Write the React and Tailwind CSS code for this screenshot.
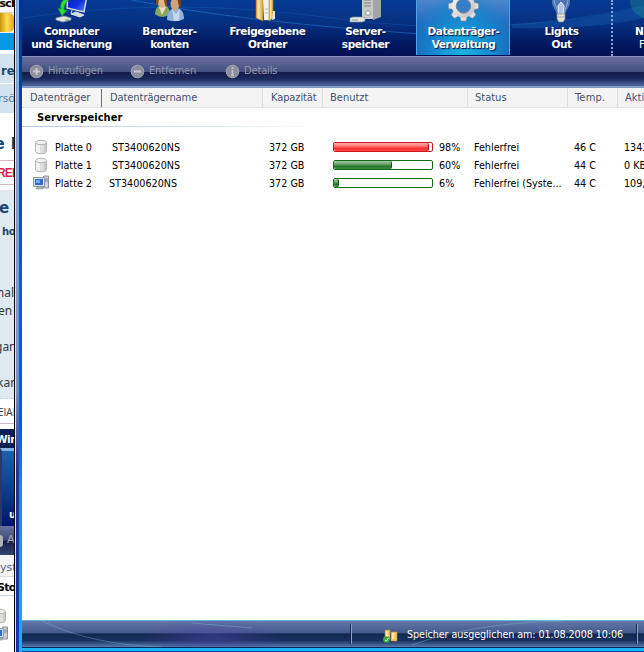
const NAV = [
  { icon: 'sync', lines: ['Computer', 'und Sicherung'] },
  { icon: 'users', lines: ['Benutzer-', 'konten'] },
  { icon: 'folder', lines: ['Freigegebene', 'Ordner'] },
  { icon: 'server', lines: ['Server-', 'speicher'] },
  { icon: 'gear', lines: ['Datenträger-', 'Verwaltung'], active: true },
  { icon: 'bulb', lines: ['Lights', 'Out'] },
]

const DISKS = [
  { name: 'Platte 0', model: 'ST3400620NS', pad: 'pl-[3px]', used: 98, color: 'red', status: 'Fehlerfrei', temp: '46 C', activity: '1343 KB/s' },
  { name: 'Platte 1', model: 'ST3400620NS', pad: 'pl-[3px]', used: 60, color: 'green', status: 'Fehlerfrei', temp: '44 C', activity: '0 KB/s' },
  { name: 'Platte 2', model: 'ST3400620NS', pad: 'pl-0', used: 6, color: 'green', status: 'Fehlerfrei (Syste...', temp: '44 C', activity: '109,5 KB/s', system: true },
]

function NavIcon({ name }) {
  return (
    <svg width="40" height="24" viewBox="0 0 40 24" className="block shrink-0">
      <defs>
        <linearGradient id="metal" x1="0" y1="0" x2="1" y2="1">
          <stop offset="0" stopColor="#fafafa" />
          <stop offset="1" stopColor="#bcbdbe" />
        </linearGradient>
        <linearGradient id="manila" x1="0" y1="0" x2="1" y2="0">
          <stop offset="0" stopColor="#d49a34" />
          <stop offset="0.3" stopColor="#ffe9a0" />
          <stop offset="1" stopColor="#d6a64c" />
        </linearGradient>
        <linearGradient id="screen" x1="0" y1="0" x2="1" y2="1">
          <stop offset="0" stopColor="#0418b0" />
          <stop offset="0.55" stopColor="#1230e0" />
          <stop offset="1" stopColor="#5a8cff" />
        </linearGradient>
      </defs>
      {name === 'sync' && (
        <>
          <path d="M17-6 36-4 33 12 16 8z" fill="url(#screen)" stroke="#d5dbe5" strokeWidth="1.400" />
          <path d="M21 10l-1 4M20 14l9 3 4-2-8-3z" fill="#d8dce0" stroke="#d8dce0" />
          <path d="M15-2C10 1 9 6 10 9L7 8l4 8 5-6-3 0c0-4 1-7 5-10z" fill="#32dc32" stroke="#0a9a24" strokeWidth=".7" />
          <path d="M5 18l8-2 7 2v2l-8 2-7-2z" fill="#e3e5e3" stroke="#8b9294" strokeWidth=".7" />
          <path d="M14 20h4" stroke="#42a846" />
        </>
      )}
      {name === 'users' && (
        <>
          <path d="M6 14c0-6 4-9 8-9s7 3 7 10l-7 2c-3 0-6-1-8-3z" fill="#86a660" />
          <path d="M10 7l3 8 4-8z" fill="#f0e0c0" />
          <ellipse cx="13" cy="1" rx="4.500" ry="7" fill="#e3b67e" />
          <path d="M7-2h3l-1 8-2-2zM15 0h3v6l-2-1z" fill="#824a1e" />
          <path d="M18 20c0-9 4-12 9-12s8 4 8 11q-7 4-17 1z" fill="#90b0da" />
          <path d="M23 9l4 5 4-5 -1 12h-5z" fill="#c4d8f0" />
          <ellipse cx="26" cy="4" rx="4.500" ry="6.500" fill="#d0a478" />
          <path d="M28-3h4v9l-2 1z" fill="#6b4423" />
        </>
      )}
      {name === 'folder' && (
        <>
          <path d="M9-3l7 2v22l-7-3z" fill="url(#manila)" stroke="#b77a20" strokeWidth=".6" />
          <path d="M16 0h7v20h-6z" fill="#f1f2f2" />
          <path d="M18 9h3M18 13h3" stroke="#b9bfc5" />
          <path d="M22-3l4 2v19l-4 3z" fill="url(#manila)" stroke="#b77a20" strokeWidth=".6" />
          <path d="M26 11h2v8l-3 1z" fill="#e8e6df" />
        </>
      )}
      {name === 'server' && (
        <>
          <path d="M17-2h11v21H17z" fill="#c8caca" />
          <path d="M28-2h8v19l-8 3z" fill="#a1a5a7" />
          <path d="M19 0h7M19 3h7M19 6h7" stroke="#7c8284" />
          <circle cx="23" cy="13" r="2.300" fill="#f8f8f8" stroke="#777" strokeWidth=".7" />
          <path d="M5 18l3-1h10l2 1v3l-3 1H5z" fill="#e4e6e6" stroke="#878e92" strokeWidth=".7" />
          <path d="M7 20h6" stroke="#70a870" />
        </>
      )}
      {name === 'gear' && (
        <g transform="translate(20.500 6)">
          {[0, 45, 90, 135].map((angle) => (
            <path
              key={angle}
              d="M-2.600-15h5.200l1 5v20l-1 5h-5.200l-1-5v-20z"
              transform={`rotate(${angle})`}
              fill="#dedfe0"
              stroke="#8c8f92"
              strokeWidth=".6"
            />
          ))}
          <circle r="11.500" fill="url(#metal)" />
          <circle r="7.200" fill="#347fca" stroke="#7f8386" />
        </g>
      )}
      {name === 'bulb' && (
        <>
          <path d="M11-4h18v6c0 5-4 8-5 13h-8C15 10 11 7 11 2z" fill="#7995c8" opacity=".65" />
          <path d="M13-2c0 8 4 9 4 16M27-2c0 8-3 9-4 16" stroke="#bacbe7" opacity=".6" fill="none" />
          <path d="M18 15l-1-9 3-4 3 4-1 9" stroke="#e4edf8" fill="#b0c2e2" />
          <path d="M16 14h8v5l-2 3h-4l-2-3z" fill="#e4e3da" stroke="#8c8c88" strokeWidth=".7" />
          <path d="M16 17h8" stroke="#aaa" />
        </>
      )}
    </svg>
  )
}

function NavBar() {
  return (
    <nav className="relative flex h-[56px] shrink-0 overflow-hidden bg-[linear-gradient(180deg,#053b94_0%,#063080_42%,#021b63_75%,#010d51_100%)]">
      <svg className="absolute inset-0" width="622" height="56">
        <path d="M0 18Q150-4 310 18T622 6" fill="none" stroke="#1768c0" opacity=".35" />
        <path d="M110 0Q220 22 400 34" fill="none" stroke="#258be0" opacity=".45" />
        <path d="M490 24Q570 20 622 6V18Q570 30 490 28z" fill="#1a70c0" opacity=".3" />
        <path d="M608 0h14v18q-14-5-14-18z" fill="#1f8290" opacity=".45" />
      </svg>
      {NAV.map(({ icon, lines, active }) => (
        <div key={icon} className="relative w-[98px] shrink-0 px-[2px]">
          <div
            className={
              active
                ? 'flex h-[55px] flex-col items-center border-x border-[#4fa3e8] bg-[radial-gradient(ellipse_at_50%_100%,#19b4e0_0%,#1784cd_50%,transparent_85%),linear-gradient(180deg,#4d87cc_0%,#256cc0_40%,#165fb5_100%)]'
                : 'flex h-[55px] flex-col items-center'
            }
          >
            <NavIcon name={icon} />
            <div className="pt-px pl-px text-center font-['DejaVu_Sans','Liberation_Sans',sans-serif] text-[10.500px] font-bold leading-[13px] tracking-[-0.4px] whitespace-nowrap text-white [text-shadow:1px_1px_1px_#001040]">
              {lines[0]}
              <br />
              {lines[1]}
            </div>
          </div>
        </div>
      ))}
      <div className="relative ml-[1px] h-full w-0 shrink-0 border-l-2 border-dotted border-[#8ba7d8]" />
      <div className="relative shrink-0 pt-[25px] pl-[22px] font-['DejaVu_Sans',sans-serif] text-[10.500px] font-bold leading-[13px] text-white">
        Netz
        <br />
        <span className="pl-[4px] font-normal">Funk</span>
      </div>
    </nav>
  )
}

function ToolButton({ sign, label, className }) {
  return (
    <div className={`flex items-center gap-[4px] ${className}`}>
      <svg width="15" height="15" viewBox="0 0 15 15">
        <circle cx="7.500" cy="7.500" r="6.300" fill="#8d8f9d" stroke="#a3a5b1" />
        {sign === 'plus' && <path d="M7.500 4v7M4 7.500h7" stroke="#c7cad4" strokeWidth="2" />}
        {sign === 'minus' && <path d="M4 7.500h7" stroke="#c7cad4" strokeWidth="2" />}
        {sign === 'info' && <path d="M7.500 3v2M7.500 6v6M6 11.500h3" stroke="#c0c3ce" strokeWidth="1.600" />}
      </svg>
      <span>{label}</span>
    </div>
  )
}

function Toolbar() {
  return (
    <div className="flex h-[30px] shrink-0 items-center border-t border-[#8790bd] bg-[linear-gradient(180deg,#666f9d_0%,#46517f_50%,#121b49_51%,#1a2a5c_75%,#5267a0_100%)] pl-[7px] font-['DejaVu_Sans_Condensed','DejaVu_Sans',sans-serif] text-[11px] tracking-[-0.15px] text-[#9396aa]">
      <ToolButton sign="plus" label="Hinzufügen" className="w-[101px]" />
      <ToolButton sign="minus" label="Entfernen" className="w-[95px]" />
      <ToolButton sign="info" label="Details" className="w-[80px]" />
    </div>
  )
}

function DiskIcon() {
  return (
    <svg width="16" height="16" viewBox="0 0 16 16">
      <path d="M2.500 3.500v9c0 3 11 3 11 0v-9" fill="#dededc" stroke="#b4b4b2" />
      <path d="M4 5v8M6 6v8" stroke="#fafafa" strokeWidth="1.500" />
      <path d="M12 5v8" stroke="#c4c4c2" strokeWidth="1.500" />
      <ellipse cx="8" cy="3.500" rx="5.500" ry="2.200" fill="#f2f2f0" stroke="#b4b4b2" />
    </svg>
  )
}

function ComputerIcon() {
  return (
    <svg width="17" height="16" viewBox="0 0 17 16">
      <path d="M10.500 1h5v12h-5z" fill="#d0d2d2" stroke="#8b9297" />
      <path d="M12 4h3M12 6h3" stroke="#7d8588" />
      <path d="M.5 2.500h11v9H.5z" fill="#d8dde5" stroke="#8d9aab" />
      <path d="M2 4h8v6H2z" fill="#2f6bd0" />
      <path d="M3 5h4v3H3z" fill="#76a9ef" />
      <path d="M4 12h6v2H3z" fill="#b9c0c8" stroke="#7f8991" strokeWidth=".6" />
    </svg>
  )
}

function UsageBar({ used, color }) {
  const red = color === 'red'
  return (
    <div className={`h-[10px] w-[100px] shrink-0 rounded-[2px] border ${red ? 'border-[#cc1720]' : 'border-[#146b1b]'}`}>
      <div
        className={`h-full rounded-[2px] border-r ${
          red
            ? 'border-[#b90c12] bg-[linear-gradient(180deg,#ffaaa5_0%,#ff7775_40%,#f62d2d_65%,#f44_100%)]'
            : 'border-[#0b5a12] bg-[linear-gradient(180deg,#a4c5a2_0%,#6aa26b_40%,#27762c_65%,#388b3c_100%)]'
        }`}
        style={{ width: `${Math.max(used - 1, 5)}%` }}
      />
    </div>
  )
}

function TableHead() {
  const cell = 'flex h-full items-center border-r border-[#dedfe3] pt-px'
  return (
    <div className="flex h-[20px] shrink-0 items-center border-b border-[#e2e3e6] bg-[#f4f4f4] font-['DejaVu_Sans_Condensed','DejaVu_Sans',sans-serif] text-[11px] whitespace-nowrap text-[#44516c]">
      <div className="flex h-[18px] w-[80px] shrink-0 items-center border-r border-[#6c7079] pt-px pl-[8px]">Datenträger</div>
      <div className={`${cell} w-[161px] shrink-0 pl-[8px] tracking-[-0.07px]`}>Datenträgername</div>
      <div className={`${cell} w-[60px] shrink-0 pl-[8px] tracking-[-0.1px]`}>Kapazität</div>
      <div className={`${cell} w-[145px] shrink-0 pl-[7px]`}>Benutzt</div>
      <div className={`${cell} w-[100px] shrink-0 pl-[7px]`}>Status</div>
      <div className={`${cell} w-[50px] shrink-0 pl-[7px] tracking-[0.2px]`}>Temp.</div>
      <div className="pt-px pl-[7px]">Aktivität</div>
    </div>
  )
}

function DiskTable() {
  return (
    <div className="flex flex-1 flex-col overflow-hidden bg-white font-['DejaVu_Sans_Condensed','DejaVu_Sans',sans-serif] text-[10.700px] text-black">
      <div className="h-[19px] shrink-0 bg-[linear-gradient(90deg,#b6c9ec,#dbe6f8_30%,white_48%)] pb-px">
        <div className="h-full bg-white pl-[15px] text-[11px] font-bold leading-[20px] tracking-[0.08px]">Serverspeicher</div>
      </div>
      <div className="pt-[11px]">
        {DISKS.map((disk) => (
          <div key={disk.name} className="flex h-[18px] items-center pl-[11px] leading-[17px] whitespace-nowrap">
            <div className="w-[22px] shrink-0">{disk.system ? <ComputerIcon /> : <DiskIcon />}</div>
            <div className="w-[54px] shrink-0 pt-px">{disk.name}</div>
            <div className={`w-[160px] shrink-0 pt-px ${disk.pad}`}>{disk.model}</div>
            <div className="w-[64px] shrink-0 pt-px">372 GB</div>
            <UsageBar used={disk.used} color={disk.color} />
            <div className="w-[41px] shrink-0 pt-px pl-[6px]">{disk.used}%</div>
            <div className="w-[100px] shrink-0 pt-px">{disk.status}</div>
            <div className="w-[50px] shrink-0 pt-px">{disk.temp}</div>
            <div className="pt-px">{disk.activity}</div>
          </div>
        ))}
      </div>
    </div>
  )
}

function StatusBar() {
  return (
    <div className="relative flex h-[28px] shrink-0 items-center overflow-hidden border-t border-b border-t-[#66b2d5] border-b-[#092859] bg-[radial-gradient(ellipse_70px_24px_at_190px_16px,#5142a880,transparent),linear-gradient(180deg,#6478a8_0%,#435a8d_45%,#10264f_50%,#183260_75%,#5979ae_100%)] whitespace-nowrap text-white">
      <svg className="absolute inset-0" width="622" height="28">
        <path d="M20 0Q70 24 140 26M170 2l60 5M390 24Q450 2 540 0" fill="none" stroke="#80cbd5" opacity=".35" />
      </svg>
      <div className="h-[20px] w-[329px] shrink-0 border-r border-[#112650]" />
      <div className="h-[20px] w-px shrink-0 bg-[#8d9fc4]" />
      <svg className="relative mt-[3px] ml-[30px] shrink-0" width="17" height="16" viewBox="0 0 17 16">
        <path d="M3 2h5v10H3zM9 4h6v9H9z" fill="#f0c870" stroke="#b98a38" strokeWidth=".6" />
        <path d="M5 3v7M11 5v6" stroke="#fff0b8" strokeWidth="1.500" />
        <circle cx="4.500" cy="11.500" r="3.300" fill="#39a83c" />
        <path d="M3 12l1.500 1 2-3" fill="none" stroke="#d8ffd8" />
      </svg>
      <div className="relative w-[226px] shrink-0 pt-[2px] pl-[8px] font-['DejaVu_Sans_Condensed','DejaVu_Sans',sans-serif] text-[10.700px] tracking-[-0.08px]">
        Speicher ausgeglichen am: 01.08.2008 10:06
      </div>
      <div className="relative ml-[11px] h-[20px] w-[2px] border-l border-[#112650] bg-[#8d9fc4]" />
    </div>
  )
}

// slice of the browser window that sits behind the console
function Background() {
  return (
    <aside className="flex w-[14px] shrink-0 flex-col overflow-hidden bg-white font-['DejaVu_Sans',sans-serif] whitespace-nowrap text-[#17486f]">
      <div className="h-[13px] shrink-0 border-b border-[#d9d8d0] bg-[#faf9f3] text-[11px] font-bold leading-[7px] tracking-[-0.8px] text-black">
        <span className="-ml-[5px]">tsch</span>
      </div>
      <div className="h-[20px] shrink-0 bg-[#eeeeef]">
        <div className="h-[19px] w-[14px] rounded-r-[5px] bg-[linear-gradient(90deg,#c8940c,#ffdf50_50%,#dba51c)]" />
      </div>
      <div className="h-[17px] shrink-0 bg-[#0798e6]" />
      <div className="h-[4px] shrink-0 bg-white" />
      <div className="h-[30px] shrink-0 border-b border-white bg-[#d3e2ef] pl-px text-[11.500px] font-bold leading-[34px]">re</div>
      <div className="h-[29px] shrink-0 bg-[#d3e2ef] font-['Noto_Sans','Open_Sans',sans-serif] text-[11.500px] leading-[27px] text-[#47799e]">
        <span className="-ml-[2px]">rsö</span>
      </div>
      <div className="h-[47px] shrink-0 bg-white text-[16px] font-bold leading-[62px]">
        <span className="-ml-[6px]">e</span> H
      </div>
      <div className="h-[25px] shrink-0 border-y border-[#d8b7bf] font-['Liberation_Sans',sans-serif] text-[12px] font-bold leading-[24px] tracking-[-0.8px] text-[#d12750]">
        <span className="-ml-[3px]">REI</span>
      </div>
      <div className="mt-[5px] flex h-[209px] shrink-0 flex-col border-b border-dashed border-[#bed3df] bg-[#dfe9f0]">
        <div className="h-[30px] shrink-0 text-[15px] font-bold leading-[36px]">
          <span className="-ml-[1px]">e</span>
        </div>
        <div className="h-[22px] shrink-0 pl-[2px] text-[10px] font-bold leading-[23px] tracking-[-0.4px]">home</div>
        <div className="mt-[42px] h-[18px] shrink-0 font-['Noto_Sans','Open_Sans',sans-serif] text-[12px] leading-[18px] text-[#333b42]">
          <span className="-ml-[7px]">mal</span>
        </div>
        <div className="h-[18px] shrink-0 font-['Noto_Sans','Open_Sans',sans-serif] text-[12px] leading-[18px] text-[#333b42]">
          <span className="-ml-[2px]">en</span>
        </div>
        <div className="mt-[18px] h-[18px] shrink-0 font-['Noto_Sans','Open_Sans',sans-serif] text-[12px] leading-[18px] text-[#333b42]">
          <span className="-ml-[5px]">gan</span>
        </div>
        <div className="mt-[18px] h-[18px] shrink-0 font-['Noto_Sans','Open_Sans',sans-serif] text-[12px] leading-[18px] text-[#333b42]">
          <span className="-ml-[3px]">kan</span>
        </div>
      </div>
      <div className="h-[25px] shrink-0 border-b border-[#d0b8ca] font-['Open_Sans',sans-serif] text-[10px] leading-[27px] text-[#333]">
        <span className="-ml-[2px]">EIAN</span>
      </div>
      <div className="mt-[5px] h-[19px] shrink-0 bg-[#0b2056] text-[10.500px] font-bold leading-[20px] tracking-[-0.5px] text-white">
        <span className="-ml-[4px]">Win</span>
      </div>
      <div className="h-[78px] shrink-0 border-t-[3px] border-l-2 border-t-[#8aafe2] border-l-[#29386a] bg-[linear-gradient(180deg,#1f5fac,#0e3d92_50%,#01156b)] pt-[57px] pl-[7px] text-[10px] font-bold leading-[14px] text-white">
        und
      </div>
      <div className="flex h-[29px] shrink-0 items-center bg-[linear-gradient(180deg,#666f9d_0%,#414a76_48%,#161e49_52%,#34436f_100%)] text-[11px] text-[#a4a7b7]">
        <span className="mr-[4px] h-[12px] w-[3px] shrink-0 rounded-r-full bg-[#aeb0ba]" />A
      </div>
      <div className="h-[22px] shrink-0 border-b border-[#ddd] bg-[#f4f4f4] text-[11px] leading-[26px] text-[#56607a]">
        <span>ystem</span>
      </div>
      <div className="h-[19px] shrink-0 border-b border-[#bcd0f0] text-[11px] font-bold leading-[21px] tracking-[-0.7px] text-black">
        <span className="-ml-[3px]">Stor</span>
      </div>
      <div className="mt-[12px] -ml-[8px]">
        <DiskIcon />
      </div>
      <div className="mt-[2px] -ml-[8px]">
        <ComputerIcon />
      </div>
    </aside>
  )
}

export default function App() {
  return (
    <div className="flex h-[652px] w-[644px] overflow-hidden bg-white">
      <Background />
      <div className="w-px shrink-0 bg-black" />
      <div className="w-px shrink-0 bg-[#dfe3ea]" />
      <div className="w-px shrink-0 bg-[linear-gradient(180deg,#7f9dcd_0%,#7c98b8_60%,#1c3090_72%,#102fa1_100%)]" />
      <div className="w-[2px] shrink-0 bg-[linear-gradient(180deg,#8fb6ee_0%,#6fa3e2_40%,#5b93e0_60%,#2038a0_72%,#1838b0_100%)]" />
      <div className="flex min-w-0 flex-1 flex-col bg-[linear-gradient(180deg,#003494_0%,#0b45aa_20%,#1458d8_45%,#0a55ee_65%,#2383ee_75%,#17b0f5_100%)] pl-[3px]">
        <NavBar />
        <Toolbar />
        <div className="h-[2px] shrink-0 bg-[#8199c5]" />
        <TableHead />
        <DiskTable />
        <StatusBar />
        <div className="h-[3px] shrink-0 bg-[#13b8f2]" />
        <div className="h-px shrink-0 bg-[#0b3fa8]" />
      </div>
    </div>
  )
}
